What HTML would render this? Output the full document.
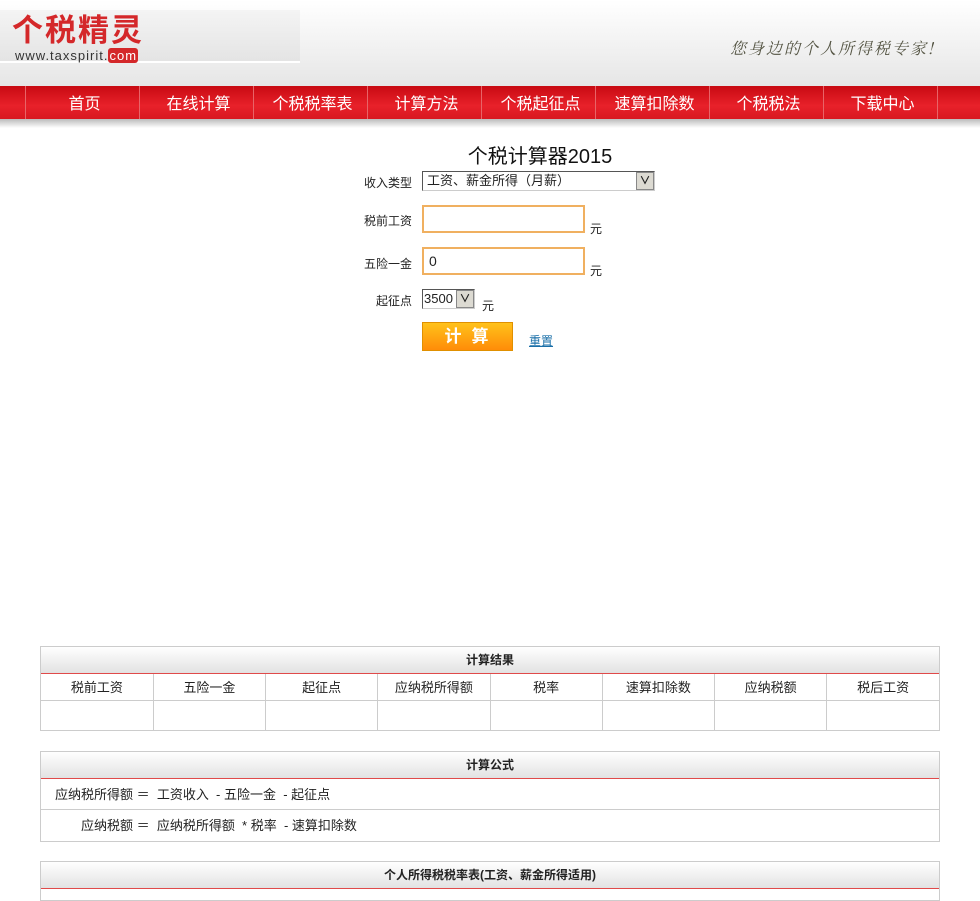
<!DOCTYPE html>
<html><head><meta charset="utf-8"><style>
*{margin:0;padding:0;box-sizing:border-box}
body{width:980px;height:891px;overflow:hidden;background:#fff;font-family:"Liberation Sans","Noto Sans CJK SC",sans-serif;font-size:12px;color:#222;position:relative}
.hdr{position:absolute;left:0;top:0;width:980px;height:86px;background:linear-gradient(#fff,#e6e6e6)}
.logo{position:absolute;left:0;top:10px;width:300px;height:53px;background:linear-gradient(#f4f4f4,#e4e4e4);border-bottom:2px solid #fff}
.logo .t{position:absolute;left:12px;top:0px;font-size:31px;font-weight:bold;color:#d4282a;letter-spacing:2px;font-family:"Noto Sans CJK SC",sans-serif;line-height:36px}
.logo .u{position:absolute;left:15px;top:38px;font-size:13px;color:#333;letter-spacing:1px}
.logo .u b{background:#d4282a;color:#fff;font-weight:normal;border-radius:3px;padding:0 1px}
.slog{position:absolute;left:730px;top:36px;font-size:16px;color:#554;font-family:"Noto Serif CJK SC",serif;letter-spacing:2px;font-style:italic}
.nav{position:absolute;left:0;top:86px;width:980px;height:33px;background:linear-gradient(#c80a12,#e8212a 60%,#d81820)}
.nav a{position:absolute;top:0;width:114px;height:33px;line-height:33px;text-align:center;color:#fff;font-size:16px;text-decoration:none;border-left:1px solid #e86468;font-family:"Noto Sans CJK SC",sans-serif;padding-left:4px}
.shadow{position:absolute;left:0;top:119px;width:980px;height:9px;background:linear-gradient(#bbb,#fff)}
h1{position:absolute;left:0;width:1080px;top:140px;text-align:center;font-size:20px;font-weight:normal;color:#111}
.lb{position:absolute;width:60px;text-align:right;font-size:12px}
.sel{position:absolute;left:422px;top:171px;width:233px;height:20px;border:1px solid #555;border-right-color:#ccc;border-bottom-color:#ccc;background:#fff;font-size:13px;line-height:18px;padding-left:4px}
.arr{position:absolute;right:0;top:0;width:18px;height:18px;background:#dcdad2;border:1px solid #888;font-size:11px;text-align:center;line-height:17px;font-weight:bold}
.in{position:absolute;left:422px;width:163px;height:28px;border:2px solid #f0b060;font-size:14px;padding:4px 5px}
.btn{position:absolute;left:422px;top:322px;width:91px;height:29px;background:linear-gradient(#ffc21a,#ff8c08);border:1px solid #e09000;color:#fff;font-weight:bold;font-size:17px;text-align:center;line-height:27px;letter-spacing:10px;padding-left:8px}
.box{position:absolute;left:40px;width:900px;border:1px solid #ccc}
.bh{height:27px;background:linear-gradient(#fff,#e2e2e2);border-bottom:1px solid #e04a4a;text-align:center;font-weight:bold;font-size:12px;line-height:26px}
table{border-collapse:collapse;width:100%;table-layout:fixed}
td{border-right:1px solid #ccc;border-bottom:1px solid #ccc;text-align:center;font-size:13px;height:26px}
td:last-child{border-right:none}
.f{height:31px;line-height:31px;border-bottom:1px solid #ccc;font-size:13px}
</style></head><body>
<div class="hdr">
<div class="logo"><div class="t">个税精灵</div><div class="u">www.taxspirit.<b>com</b></div></div>
<div class="slog">您身边的个人所得税专家!</div>
</div>
<div class="nav">
<a style="left:25px">首页</a><a style="left:139px">在线计算</a><a style="left:253px">个税税率表</a><a style="left:367px">计算方法</a><a style="left:481px">个税起征点</a><a style="left:595px">速算扣除数</a><a style="left:709px">个税税法</a><a style="left:823px">下载中心</a><a style="left:937px;width:10px"></a>
</div>
<div class="shadow"></div>
<h1>个税计算器2015</h1>
<div class="lb" style="left:352px;top:174px">收入类型</div>
<div class="sel">工资、薪金所得（月薪）<div class="arr">∨</div></div>
<div class="lb" style="left:352px;top:212px">税前工资</div>
<div class="in" style="top:205px"></div><div style="position:absolute;left:590px;top:220px">元</div>
<div class="lb" style="left:352px;top:255px">五险一金</div>
<div class="in" style="top:247px">0</div><div style="position:absolute;left:590px;top:262px">元</div>
<div class="lb" style="left:352px;top:292px">起征点</div>
<div class="sel" style="width:53px;top:289px;padding-left:1px;font-size:13px">3500<div class="arr">∨</div></div><div style="position:absolute;left:482px;top:297px">元</div>
<div class="btn">计算</div>
<div style="position:absolute;left:529px;top:332px;color:#1a6fa8;text-decoration:underline">重置</div>
<div class="box" style="top:646px"><div class="bh">计算结果</div>
<table><tr><td>税前工资</td><td>五险一金</td><td>起征点</td><td>应纳税所得额</td><td>税率</td><td>速算扣除数</td><td>应纳税额</td><td>税后工资</td></tr>
<tr><td style="height:30px;border-bottom:none"></td><td style="border-bottom:none"></td><td style="border-bottom:none"></td><td style="border-bottom:none"></td><td style="border-bottom:none"></td><td style="border-bottom:none"></td><td style="border-bottom:none"></td><td style="border-bottom:none"></td></tr></table></div>
<div class="box" style="top:751px"><div class="bh">计算公式</div>
<div class="f" style="padding-left:14px">应纳税所得额 ＝ &nbsp;工资收入 &nbsp;- 五险一金 &nbsp;- 起征点</div>
<div class="f" style="padding-left:40px;border-bottom:none">应纳税额 ＝ &nbsp;应纳税所得额 &nbsp;* 税率 &nbsp;- 速算扣除数</div></div>
<div class="box" style="top:861px;height:40px"><div class="bh">个人所得税税率表(工资、薪金所得适用)</div></div>
</body></html>
